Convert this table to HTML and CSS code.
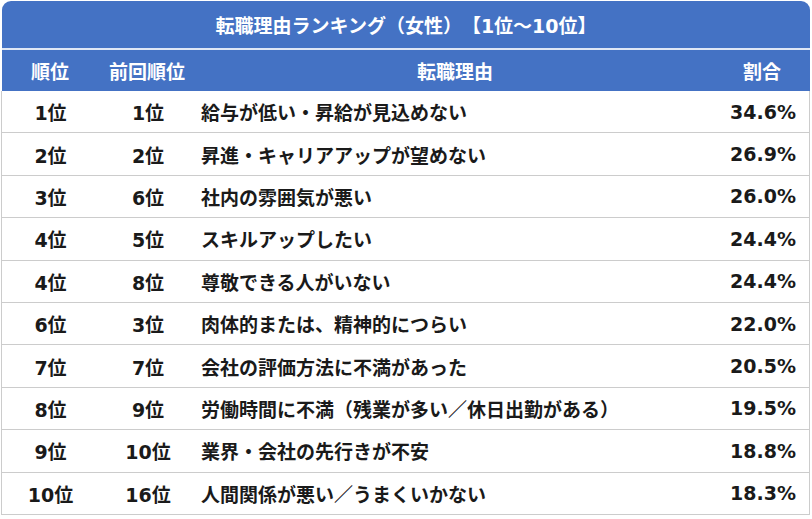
FILE: index.html
```html
<!DOCTYPE html>
<html lang="ja">
<head>
<meta charset="utf-8">
<link rel="stylesheet" href="styles.css">
</head>
<body>
<div class="table">
  <div class="title">転職理由ランキング（女性）【1位～10位】</div>
  <div class="row head">
    <div class="c1">順位</div>
    <div class="c2">前回順位</div>
    <div class="c3">転職理由</div>
    <div class="c4">割合</div>
  </div>
  <div class="row"><div class="c1">1位</div><div class="c2">1位</div><div class="c3">給与が低い・昇給が見込めない</div><div class="c4">34.6%</div></div>
  <div class="row"><div class="c1">2位</div><div class="c2">2位</div><div class="c3">昇進・キャリアアップが望めない</div><div class="c4">26.9%</div></div>
  <div class="row"><div class="c1">3位</div><div class="c2">6位</div><div class="c3">社内の雰囲気が悪い</div><div class="c4">26.0%</div></div>
  <div class="row"><div class="c1">4位</div><div class="c2">5位</div><div class="c3">スキルアップしたい</div><div class="c4">24.4%</div></div>
  <div class="row"><div class="c1">4位</div><div class="c2">8位</div><div class="c3">尊敬できる人がいない</div><div class="c4">24.4%</div></div>
  <div class="row"><div class="c1">6位</div><div class="c2">3位</div><div class="c3">肉体的または、精神的につらい</div><div class="c4">22.0%</div></div>
  <div class="row"><div class="c1">7位</div><div class="c2">7位</div><div class="c3">会社の評価方法に不満があった</div><div class="c4">20.5%</div></div>
  <div class="row"><div class="c1">8位</div><div class="c2">9位</div><div class="c3">労働時間に不満（残業が多い／休日出勤がある）</div><div class="c4">19.5%</div></div>
  <div class="row"><div class="c1">9位</div><div class="c2">10位</div><div class="c3">業界・会社の先行きが不安</div><div class="c4">18.8%</div></div>
  <div class="row"><div class="c1">10位</div><div class="c2">16位</div><div class="c3">人間関係が悪い／うまくいかない</div><div class="c4">18.3%</div></div>
</div>
</body>
</html>
```
FILE: styles.css
```css
html, body {
  margin: 0;
  padding: 0;
  background: #ffffff;
}
body {
  font-family: "DejaVu Sans", "Noto Sans CJK JP", sans-serif;
  font-weight: bold;
  font-size: 19px;
  color: #1a1a1a;
  text-spacing-trim: space-all;
}
.table {
  width: 809px;
  margin: 1px 0 0 1px;
}
.title {
  height: 47px;
  background: #4472c4;
  color: #ffffff;
  border-radius: 9px 9px 0 0;
  margin-left: 1px;
  display: flex;
  align-items: center;
  justify-content: center;
  border-bottom: 2px solid #dfe7f5;
}
.row {
  display: grid;
  grid-template-columns: 97px 98px 518px 1fr;
  height: 41.4px;
  align-items: center;
  border: 1px solid #cccccc;
  border-top: none;
}
.row.head {
  height: 41px;
  background: #4472c4;
  color: #ffffff;
  border: none;
  margin-left: 1px;
  grid-template-columns: 96px 98px 518px 1fr;
}
.c1, .c2 {
  text-align: center;
}
.c3 {
  padding-left: 4px;
}
.head .c3 {
  text-align: center;
  padding-left: 0;
}
.c4 {
  text-align: right;
  padding-right: 13px;
}
.head .c4 {
  text-align: center;
  padding-right: 0;
}
```
